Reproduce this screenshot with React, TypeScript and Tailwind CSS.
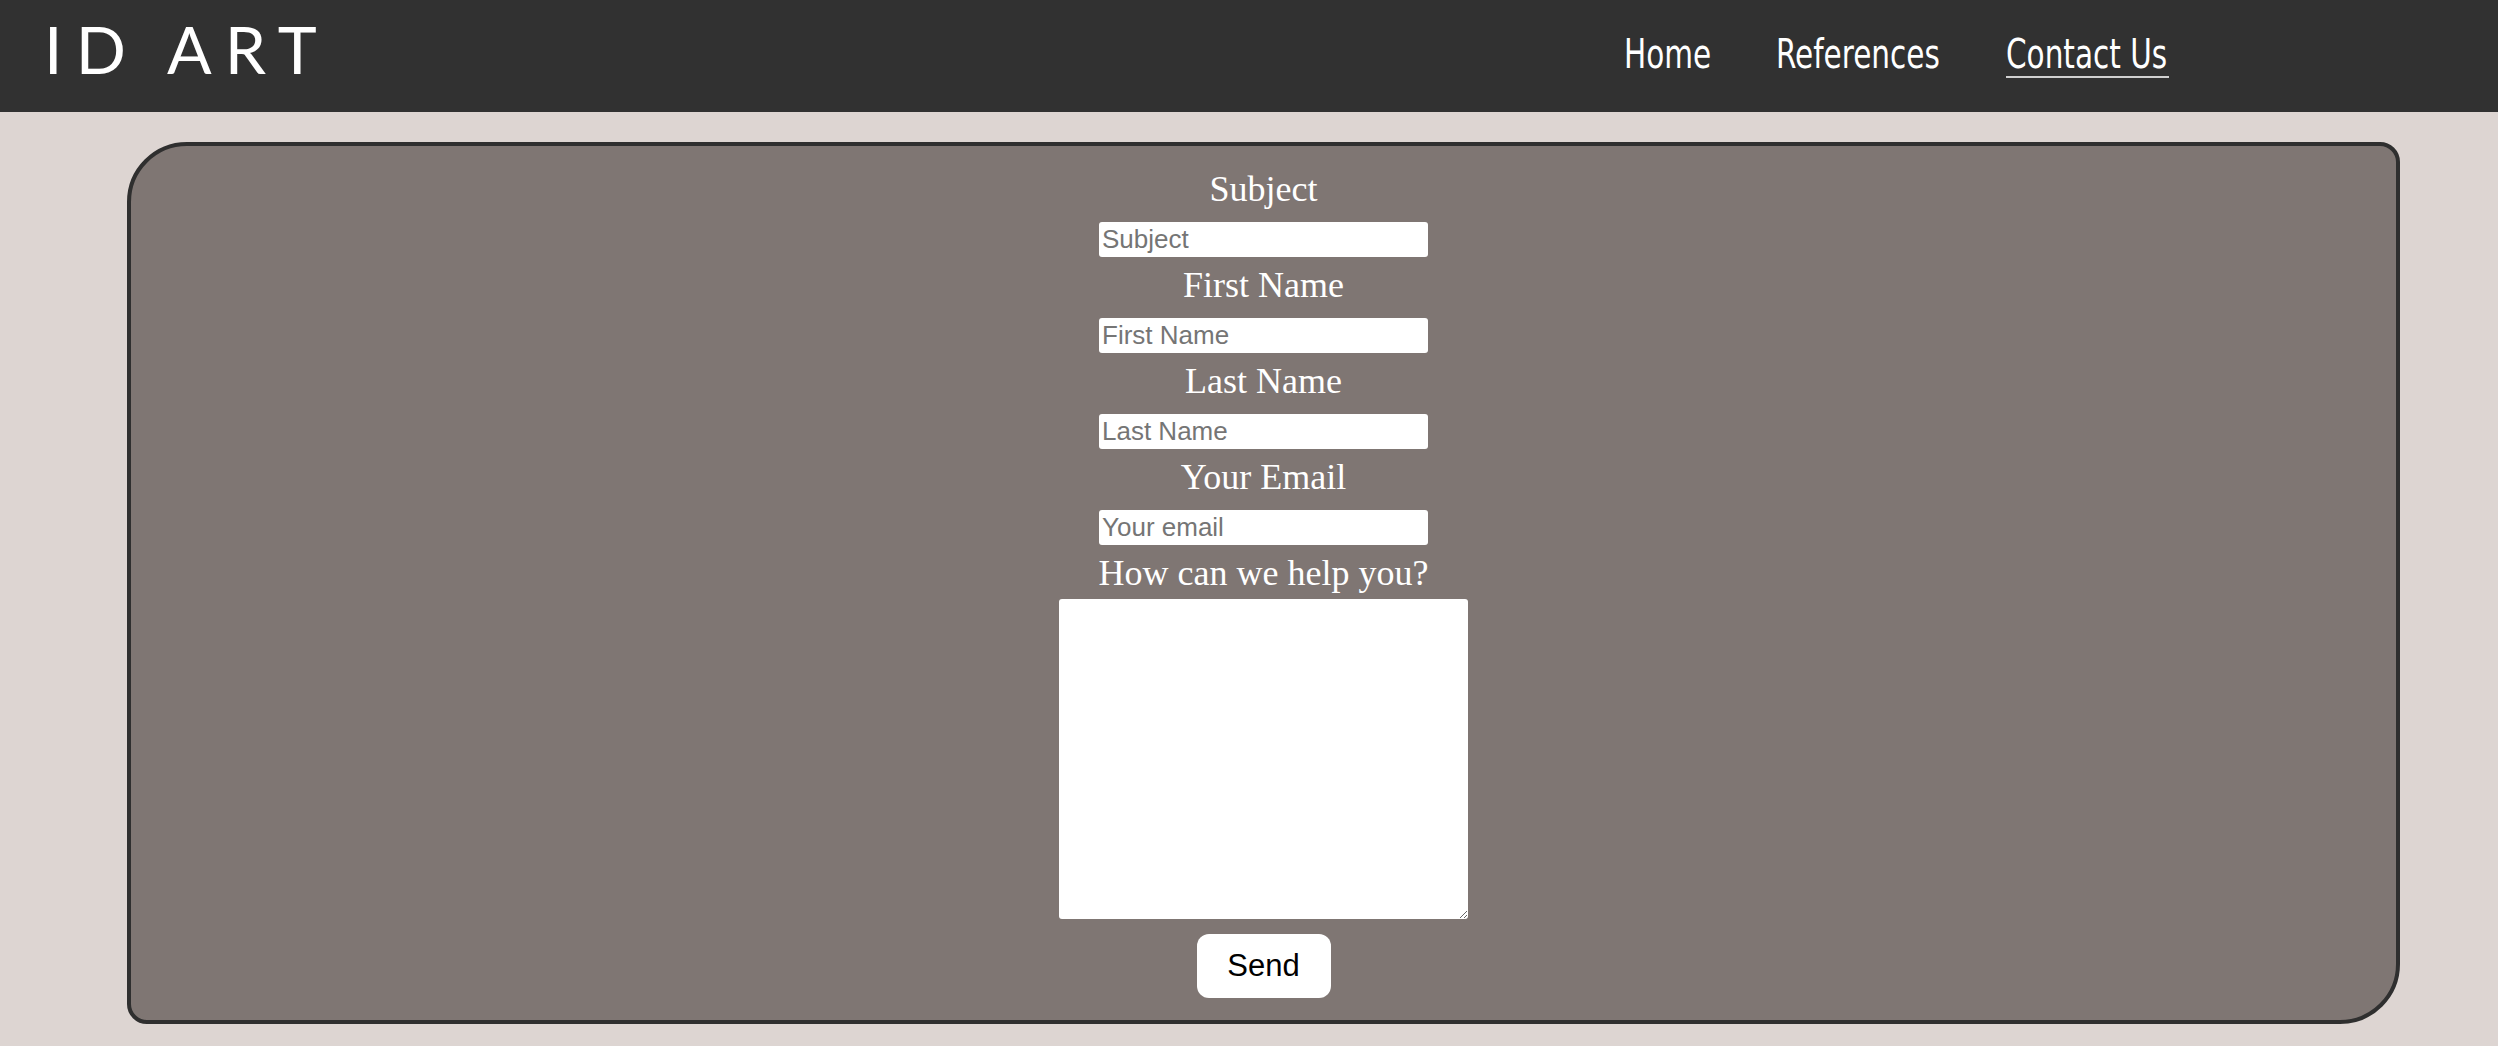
const navLinks = [
  { label: "Home", width: "w-[86px]", active: false },
  { label: "References", width: "w-[164px]", active: false },
  { label: "Contact Us", width: "w-[163px]", active: true },
];

const fields = [
  { label: "Subject", placeholder: "Subject", type: "text" },
  { label: "First Name", placeholder: "First Name", type: "text" },
  { label: "Last Name", placeholder: "Last Name", type: "text" },
  { label: "Your Email", placeholder: "Your email", type: "email" },
];

function Header() {
  return (
    <header className="h-[112px] bg-[#313131] flex items-start justify-between">
      <div className="pl-[44px] pt-[9px] text-white font-['Lato',sans-serif] text-[66px] leading-[79px] tracking-[0.2em] whitespace-nowrap">
        ID ART
      </div>
      <nav className="flex items-start gap-[66px] mr-[329px] pt-[34px]">
        {navLinks.map((link) => (
          <a
            key={link.label}
            href="#"
            className={`block ${link.width} pb-[1px] whitespace-nowrap text-white font-['DejaVu_Sans_Condensed','DejaVu_Sans',sans-serif] text-[41px] leading-[41px] border-b-2 ${
              link.active ? "border-[#d0d0d0]" : "border-transparent"
            }`}
          >
            <span className="inline-block origin-left scale-x-[0.8]">{link.label}</span>
          </a>
        ))}
      </nav>
    </header>
  );
}

function ContactForm() {
  return (
    <form
      className="ml-[127px] w-[2273px] border-4 border-[#2f2f2f] bg-[#7f7673] rounded-tl-[60px] rounded-br-[60px] rounded-tr-[20px] rounded-bl-[20px] pt-[15px] pb-[22px] flex flex-col items-center"
      onSubmit={(e) => e.preventDefault()}
    >
      {fields.map((f) => (
        <div key={f.label} className="flex flex-col items-center">
          <label className="mt-2 mb-3 text-white font-['Liberation_Serif',serif] text-[36px] leading-[41px]">
            {f.label}
          </label>
          <input
            type={f.type}
            placeholder={f.placeholder}
            className="w-[329px] h-[35px] bg-white rounded-[3px] px-[3px] text-black text-[26px] font-['Liberation_Sans',Arial,sans-serif] placeholder:text-[#757575] outline-none"
          />
        </div>
      ))}
      <label className="mt-2 mb-[5px] text-white font-['Liberation_Serif',serif] text-[36px] leading-[41px]">
        How can we help you?
      </label>
      <textarea className="w-[409px] h-[320px] bg-white rounded-[3px] text-black text-[20px] font-['Liberation_Sans',Arial,sans-serif] outline-none" />
      <button
        type="submit"
        className="mt-[15px] w-[134px] h-[64px] bg-white rounded-[12px] text-black text-[31px] font-['Liberation_Sans',Arial,sans-serif]"
      >
        Send
      </button>
    </form>
  );
}

export default function App() {
  return (
    <div className="min-h-screen bg-[#ddd5d2]">
      <Header />
      <main className="pt-[30px] pb-[22px]">
        <ContactForm />
      </main>
    </div>
  );
}
